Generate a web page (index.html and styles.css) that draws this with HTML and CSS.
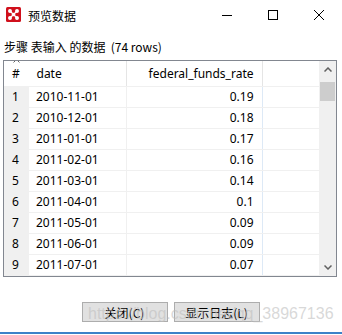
FILE: index.html
```html
<!DOCTYPE html>
<html lang="zh-CN">
<head>
    <meta charset="UTF-8">
    <title>预览数据</title>
    <link rel="stylesheet" href="styles.css">
</head>
<body>
    <div class="titlebar">
        <svg class="app-icon" width="15" height="15" viewBox="0 0 15 15">
            <rect width="15" height="15" rx="1.5" fill="#d0101c"/>
            <g stroke="#fff" stroke-width="1.3" fill="#fff">
                <line x1="4" y1="4" x2="11" y2="11"/>
                <line x1="11" y1="4" x2="4" y2="11"/>
                <circle cx="4" cy="4" r="1.3"/>
                <circle cx="11" cy="4" r="1.3"/>
                <circle cx="4" cy="11" r="1.3"/>
                <circle cx="11" cy="11" r="1.3"/>
                <circle cx="7.5" cy="7.5" r="1.2"/>
            </g>
        </svg>
        <span class="title">预览数据</span>
        <div class="controls">
            <span class="ctl"><svg width="10" height="10" viewBox="0 0 10 10"><line x1="0" y1="5.5" x2="10" y2="5.5" stroke="#000" stroke-width="1"/></svg></span>
            <span class="ctl"><svg width="10" height="10" viewBox="0 0 10 10"><rect x="0.5" y="0.5" width="9" height="9" fill="none" stroke="#000" stroke-width="1"/></svg></span>
            <span class="ctl"><svg width="10" height="10" viewBox="0 0 10 10"><path d="M0 0L10 10M10 0L0 10" stroke="#000" stroke-width="1"/></svg></span>
        </div>
    </div>

    <div class="caption">步骤 表输入 的数据&nbsp;&nbsp;(74 rows)</div>

    <div class="grid">
        <div class="scroll-area">
            <table>
                <colgroup>
                    <col class="c-num">
                    <col class="c-date">
                    <col class="c-rate">
                    <col>
                </colgroup>
                <thead>
                    <tr>
                        <th class="num">
                            <svg class="sort" width="7" height="4" viewBox="0 0 7 4"><path d="M0.5 3.5L3.5 0.5L6.5 3.5" fill="none" stroke="#666" stroke-width="1"/></svg>
                            #
                        </th>
                        <th class="date">date</th>
                        <th class="rate">federal_funds_rate</th>
                        <th class="fill"></th>
                    </tr>
                </thead>
                <tbody>
                    <tr><td class="num">1</td><td class="date">2010-11-01</td><td class="rate">0.19</td><td class="fill"></td></tr>
                    <tr><td class="num">2</td><td class="date">2010-12-01</td><td class="rate">0.18</td><td class="fill"></td></tr>
                    <tr><td class="num">3</td><td class="date">2011-01-01</td><td class="rate">0.17</td><td class="fill"></td></tr>
                    <tr><td class="num">4</td><td class="date">2011-02-01</td><td class="rate">0.16</td><td class="fill"></td></tr>
                    <tr><td class="num">5</td><td class="date">2011-03-01</td><td class="rate">0.14</td><td class="fill"></td></tr>
                    <tr><td class="num">6</td><td class="date">2011-04-01</td><td class="rate">0.1</td><td class="fill"></td></tr>
                    <tr><td class="num">7</td><td class="date">2011-05-01</td><td class="rate">0.09</td><td class="fill"></td></tr>
                    <tr><td class="num">8</td><td class="date">2011-06-01</td><td class="rate">0.09</td><td class="fill"></td></tr>
                    <tr><td class="num">9</td><td class="date">2011-07-01</td><td class="rate">0.07</td><td class="fill"></td></tr>
                </tbody>
            </table>
        </div>
        <div class="scrollbar">
            <div class="arrow"><svg width="8" height="5" viewBox="0 0 8 5"><path d="M0.5 4.5L4 1L7.5 4.5" fill="none" stroke="#606060" stroke-width="1.5"/></svg></div>
            <div class="thumb"></div>
            <div class="track"></div>
            <div class="arrow"><svg width="8" height="5" viewBox="0 0 8 5"><path d="M0.5 0.5L4 4L7.5 0.5" fill="none" stroke="#606060" stroke-width="1.5"/></svg></div>
        </div>
    </div>

    <div class="buttons">
        <button>关闭(C)</button>
        <button>显示日志(L)</button>
        <span class="watermark">https://blog.csdn.net/qq_38967136</span>
    </div>

    <div class="bottom-line"></div>
</body>
</html>
```

FILE: styles.css
```css
body {
    margin: 0;
    width: 342px;
    height: 335px;
    background: #fff;
    font-family: "Segoe UI", "Noto Sans", "Noto Sans CJK SC", sans-serif;
    font-size: 12px;
    color: #000;
    overflow: hidden;
}
.titlebar {
    height: 30px;
    display: flex;
    align-items: center;
}
.app-icon {
    margin-left: 6px;
    margin-top: -1px;
}
.title {
    margin-left: 7px;
    font-family: "Noto Sans CJK SC", sans-serif;
    font-size: 12px;
}
.controls {
    margin-left: auto;
    display: flex;
    height: 30px;
}
.ctl {
    width: 46px;
    display: flex;
    align-items: center;
    justify-content: center;
}
.caption {
    margin-top: 10px;
    margin-left: 4px;
    height: 14px;
    line-height: 14px;
    font-family: "Segoe UI", "Noto Sans CJK SC", sans-serif;
}
.grid {
    margin: 6px 5px 0 3px;
    height: 215px;
    border: 1px solid #828790;
    display: flex;
}
.scroll-area {
    flex: 1;
    overflow: hidden;
}
table {
    border-collapse: collapse;
    table-layout: fixed;
    width: 100%;
}
.c-num { width: 25px; }
.c-date { width: 97px; }
.c-rate { width: 136px; }
th, td {
    padding: 0;
    font-weight: normal;
    white-space: nowrap;
    line-height: 16px;
}
th {
    height: 25px;
    text-align: left;
    border-right: 1px solid #e5e5e5;
    border-bottom: 1px solid #f0f0f0;
    position: relative;
}
td {
    height: 20px;
    border-bottom: 1px solid #f0f0f0;
}
.num {
    padding-left: 8px;
    background: #f0f0f0;
    border-bottom-color: #f0f0f0;
}
th.num {
    background: #fff;
    border-right-color: #fff;
}
.sort {
    position: absolute;
    left: 9px;
    top: -2px;
}
.date {
    padding-left: 7px;
    border-right: 1px solid #f0f0f0;
}
.rate {
    text-align: right;
    padding-right: 8px;
    border-right: 1px solid #dde9f6;
}
th.date, th.rate {
    border-right-color: #e5e5e5;
}
th.fill {
    border-right: none;
}
.scrollbar {
    width: 17px;
    background: #f0f0f0;
    display: flex;
    flex-direction: column;
}
.arrow {
    height: 17px;
    display: flex;
    align-items: center;
    justify-content: center;
}
.thumb {
    margin: 4px 1px 0 1px;
    height: 19px;
    background: #cdcdcd;
}
.track {
    flex: 1;
}
.buttons {
    margin-top: 25px;
    display: flex;
    justify-content: center;
    gap: 6px;
    position: relative;
    padding-right: 1px;
}
button {
    width: 86px;
    height: 20px;
    padding: 0;
    background: #e1e1e1;
    border: 1px solid #adadad;
    font-family: "Noto Sans CJK SC", "Segoe UI", sans-serif;
    font-size: 12px;
    color: #000;
}
.watermark {
    position: absolute;
    left: 88px;
    top: 3px;
    font-family: "Liberation Sans", Arial, sans-serif;
    font-size: 16px;
    color: rgba(190, 190, 190, 0.6);
    pointer-events: none;
}
.bottom-line {
    margin-top: 10px;
    height: 2px;
    background: #3c82c8;
}
```
